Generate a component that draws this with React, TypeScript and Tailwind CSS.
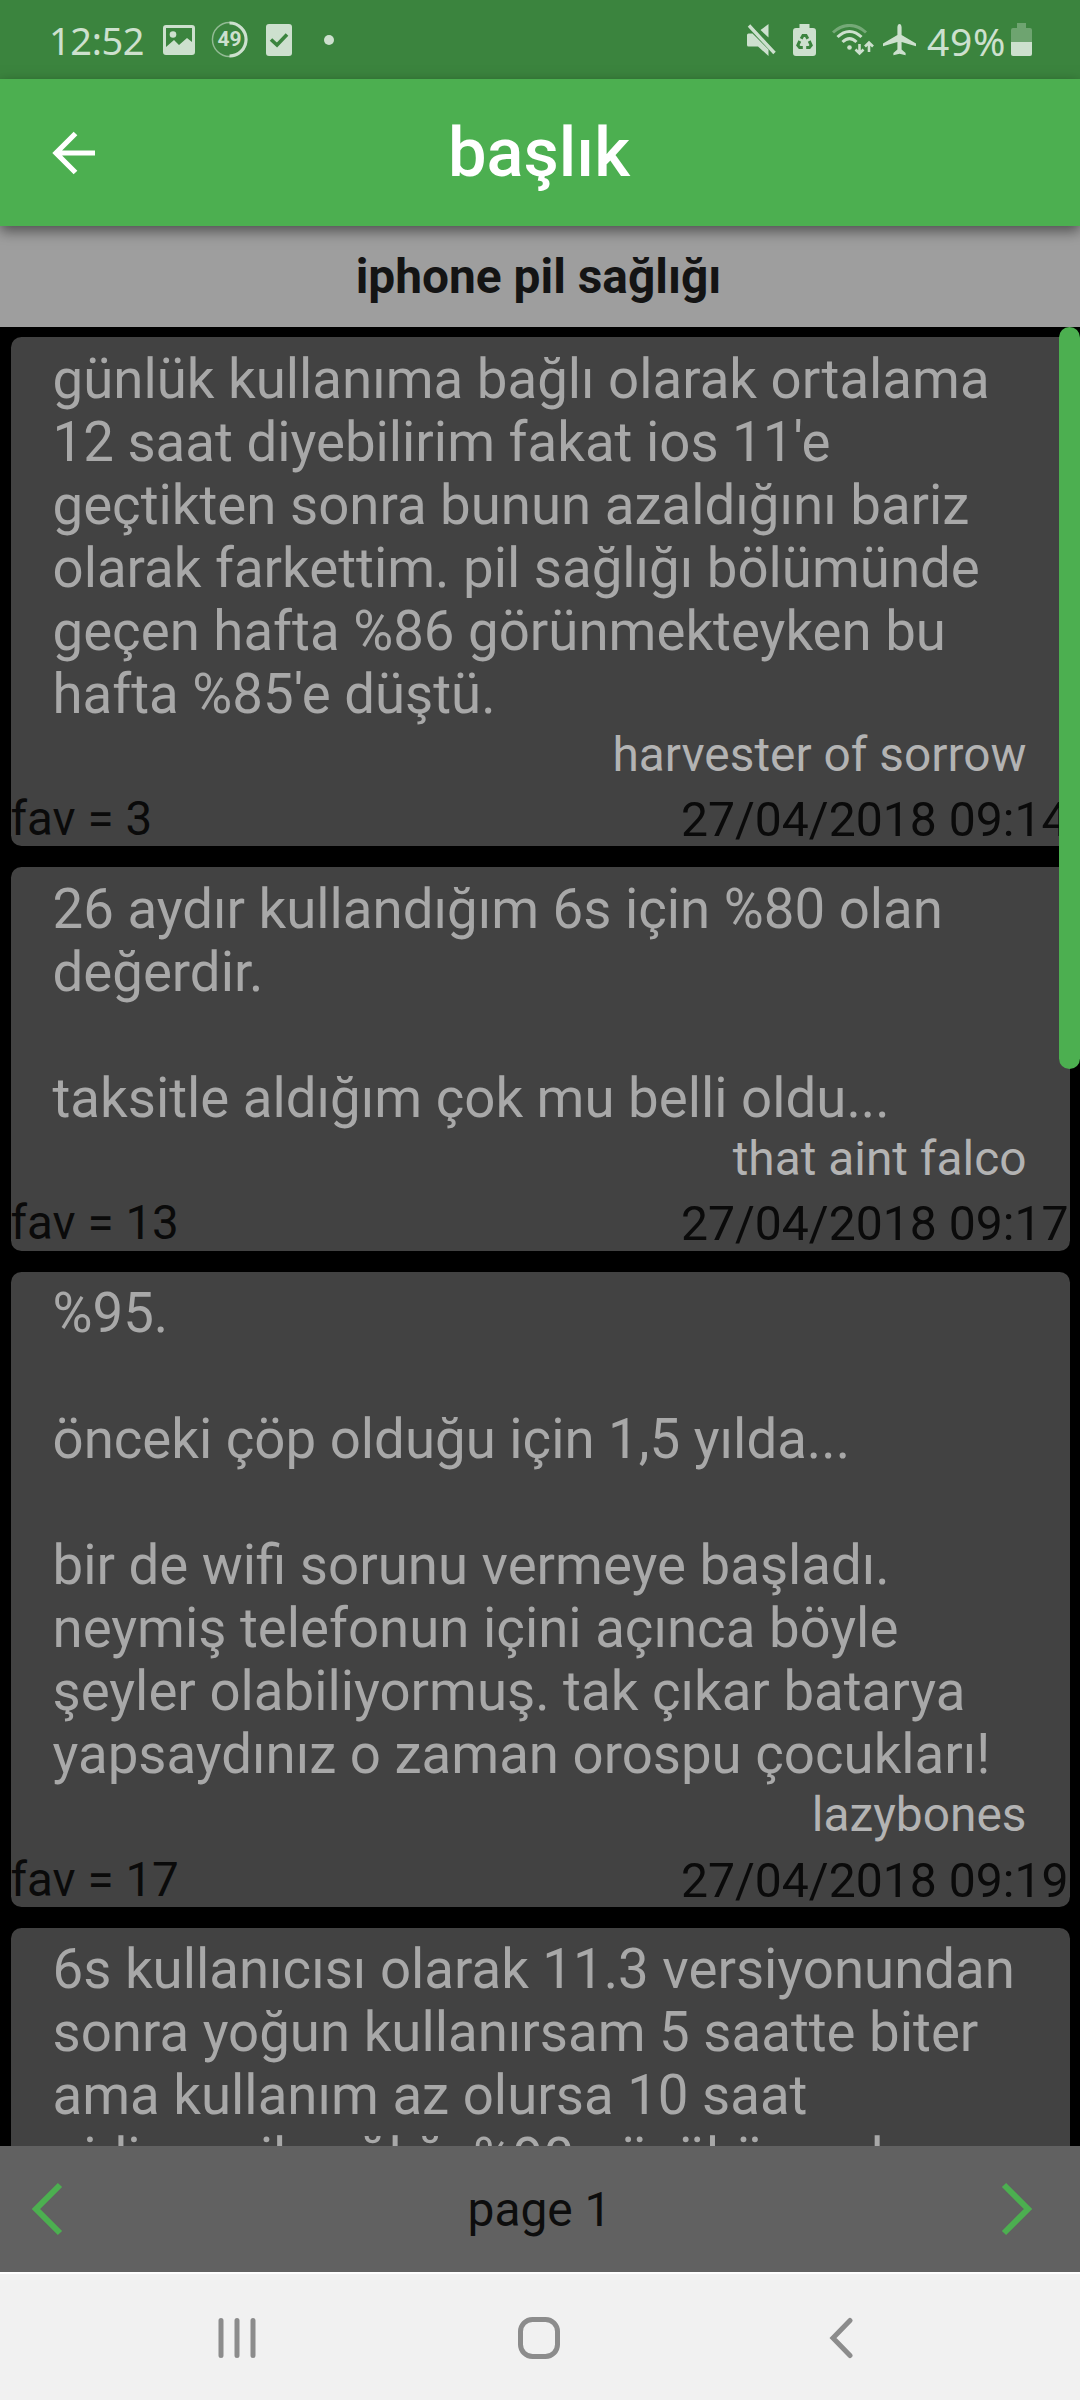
import type { ReactNode } from "react";

type Entry = { lines: string[]; author?: string; fav?: number; date?: string };

const entries: Entry[] = [
  {
    lines: [
      "günlük kullanıma bağlı olarak ortalama",
      "12 saat diyebilirim fakat ios 11'e",
      "geçtikten sonra bunun azaldığını bariz",
      "olarak farkettim. pil sağlığı bölümünde",
      "geçen hafta %86 görünmekteyken bu",
      "hafta %85'e düştü.",
    ],
    author: "harvester of sorrow",
    fav: 3,
    date: "27/04/2018 09:14",
  },
  {
    lines: ["26 aydır kullandığım 6s için %80 olan", "değerdir.", "", "taksitle aldığım çok mu belli oldu..."],
    author: "that aint falco",
    fav: 13,
    date: "27/04/2018 09:17",
  },
  {
    lines: [
      "%95.",
      "",
      "önceki çöp olduğu için 1,5 yılda...",
      "",
      "bir de wifi sorunu vermeye başladı.",
      "neymiş telefonun içini açınca böyle",
      "şeyler olabiliyormuş. tak çıkar batarya",
      "yapsaydınız o zaman orospu çocukları!",
    ],
    author: "lazybones",
    fav: 17,
    date: "27/04/2018 09:19",
  },
  {
    lines: [
      "6s kullanıcısı olarak 11.3 versiyonundan",
      "sonra yoğun kullanırsam 5 saatte biter",
      "ama kullanım az olursa 10 saat",
      "gidiyor pil sağlığı %90 gözüküyor de",
    ],
  },
];

function StatusBar() {
  return (
    <div className="flex h-[79px] shrink-0 items-center bg-[#3b843e] text-[#cde0ce]">
      <span className="ml-[49px] w-[114px] whitespace-nowrap pt-0.5 font-['Noto_Sans'] text-[38px] leading-[79px] tracking-[-0.4px]">
        12:52
      </span>
      <svg width="32" height="30" viewBox="0 0 32 30" fill="currentColor">
        <path
          fillRule="evenodd"
          d="M3 0h26a3 3 0 0 1 3 3v24a3 3 0 0 1-3 3H3a3 3 0 0 1-3-3V3a3 3 0 0 1 3-3ZM3 3v19l8-7 5 5 8-7 5 4V3Z"
        />
        <circle cx="10" cy="9.500" r="3.300" />
      </svg>
      <span className="relative ml-4 flex h-[37px] w-[37px] items-center justify-center">
        <svg className="absolute inset-0" width="37" height="37" viewBox="0 0 38 38" fill="none" stroke="currentColor">
          <circle cx="19" cy="19" r="17.500" strokeWidth="1.500" opacity="0.6" />
          <path d="M19 2a17 17 0 0 1 0 34" strokeWidth="3.200" />
        </svg>
        <span className="font-['Roboto'] text-[21px] font-bold leading-none">49</span>
      </span>
      <svg className="ml-[18px]" width="26" height="32" viewBox="0 0 26 32">
        <rect width="26" height="32" rx="3" fill="currentColor" />
        <path d="M5 15.500l6 5.500 10-10.500" fill="none" stroke="#3b843e" strokeWidth="3.600" />
      </svg>
      <span className="ml-8 h-2.5 w-2.5 rounded-full bg-current" />

      <svg className="ml-auto" width="29" height="32" viewBox="0 0 29 32" fill="currentColor">
        <path d="M21.500 0v13.500L13.500 6ZM1.500 9.500h4l16 16v6.500L11 22.500H1.500A1.500 1.500 0 0 1 0 21V11a1.500 1.500 0 0 1 1.500-1.500Z" />
        <path d="M2 1.500 27.500 29" stroke="currentColor" strokeWidth="3.400" />
        <path d="M4.500 0 29 26.500" stroke="#3b843e" strokeWidth="1.200" />
      </svg>
      <svg className="ml-[17px]" width="23" height="32" viewBox="0 0 23 32">
        <path fill="currentColor" d="M6.500 0h10v4H20a3 3 0 0 1 3 3v22a3 3 0 0 1-3 3H3a3 3 0 0 1-3-3V7a3 3 0 0 1 3-3h3.500Z" />
        <g fill="none" stroke="#3b843e" strokeWidth="3">
          <path d="M8.200 14.800 10 11.500h3l1.800 3.300" />
          <path d="M6.800 17 4.800 21.300 6.600 23.500h3.200" />
          <path d="M16.200 17 18.200 21.300 16.400 23.500h-3.200" />
        </g>
      </svg>
      <svg className="ml-4" width="42" height="32" viewBox="0 0 42 32" fill="none" stroke="currentColor" strokeWidth="3">
        <path d="M1 8.500C11-1 24-1 34 8.500" opacity="0.4" />
        <path d="M5.500 13C13 5.500 22 5.500 29.500 13" />
        <path d="M10.500 18C15 13.500 20 13.500 24.500 18" />
        <circle cx="17.500" cy="23.500" r="2.300" fill="currentColor" stroke="none" />
        <path d="M27.500 20v9M23.500 25.500l4 4 4-4M37 28v-9M33 22.500l4-4 4 4" strokeWidth="2.600" />
      </svg>
      <svg className="ml-[9px]" width="33" height="32" viewBox="0 0 33 32" fill="currentColor">
        <path d="M16.500 0c1.300 0 2.100 1.600 2.100 3.500V11L33 19.500v2.700L18.600 18v7.500l4 3.500v2.300l-6.100-1.500-6.100 1.500V29l4-3.500V18L0 22.200v-2.700L14.400 11V3.500C14.400 1.600 15.200 0 16.500 0Z" />
      </svg>
      <span className="ml-[11px] w-[80px] whitespace-nowrap pt-0.5 font-['Noto_Sans'] text-[39px] leading-[79px] tracking-[0.7px]">
        49%
      </span>
      <svg className="ml-[4px] mr-[48px]" width="21" height="33" viewBox="0 0 21 33" fill="currentColor">
        <path d="M6 0h9v5h4a2 2 0 0 1 2 2v12H0V7a2 2 0 0 1 2-2h4Z" opacity="0.35" />
        <path d="M0 19h21v12a2 2 0 0 1-2 2H2a2 2 0 0 1-2-2Z" />
      </svg>
    </div>
  );
}

function AppBar() {
  return (
    <header className="relative z-10 flex h-[147px] shrink-0 items-center bg-[#4caf50] pl-[52px] shadow-[0_5px_13px_rgba(0,0,0,0.5)]">
      <svg width="44" height="44" viewBox="0 0 44 44" fill="none" stroke="#fff" strokeWidth="5.200">
        <path d="M43 22H5M23.500 2.500 4 22 23.500 41.500" />
      </svg>
      <h1 className="mr-[98px] flex-1 pt-px text-center text-[68.6px] font-medium leading-none text-white">başlık</h1>
    </header>
  );
}

function EntryCard({ lines, author, fav, date }: Entry) {
  return (
    <article className="shrink-0 rounded-[10.5px] bg-[#424242] pt-[10.5px]">
      <div className="whitespace-pre px-[42px] text-[54.6px] leading-[62px] text-[#a8a8a8]">
        {lines.map((line, i) => (
          <p key={i} className="h-[63px]">
            {line}
          </p>
        ))}
      </div>
      {author && (
        <>
          <p className="h-[55px] pl-[42px] pr-[43px] text-right text-[47.85px] leading-[59px] text-[#b3b3b3]">{author}</p>
          <div className="mt-[10.5px] flex h-[55.25px] justify-between whitespace-nowrap pr-px text-[48.1px] leading-[57px] text-[#0a0a0a]">
            <span className="text-[47.6px]">fav = {fav}</span>
            <span>{date}</span>
          </div>
        </>
      )}
    </article>
  );
}

function NavItem({ children }: { children: ReactNode }) {
  return <div className="flex flex-1 items-center justify-center">{children}</div>;
}

export default function App() {
  return (
    <div className="flex h-[2400px] w-[1080px] flex-col overflow-hidden bg-black font-['Roboto',sans-serif]">
      <StatusBar />
      <AppBar />
      <h2 className="h-[100.5px] shrink-0 bg-[#9e9e9e] pr-[3px] text-center text-[47.85px] font-bold leading-[102px] text-[#141414]">
        iphone pil sağlığı
      </h2>
      <main className="relative flex min-h-0 flex-1 flex-col gap-[21px] overflow-hidden px-[10.5px] pt-[10.5px]">
        {entries.map((e, i) => (
          <EntryCard key={i} {...e} />
        ))}
        <div className="absolute right-0 top-0 h-[742.5px] w-[21.5px] rounded-full bg-[#4caf50]" />
      </main>
      <footer className="flex h-[126px] shrink-0 items-center bg-[#616161] pl-[31px] pr-[47px] text-[47.9px] text-[#0d0d0d]">
        <svg width="32" height="54" viewBox="0 0 32 54" fill="none" stroke="#4caf50" strokeWidth="6">
          <path d="M29 3 5 27 29 51" />
        </svg>
        <span className="flex-1 pl-[15px] pt-[3px] text-center">page 1</span>
        <svg width="32" height="54" viewBox="0 0 32 54" fill="none" stroke="#4caf50" strokeWidth="6">
          <path d="M3 3 27 27 3 51" />
        </svg>
      </footer>
      <nav className="flex h-[128px] shrink-0 border-t-2 border-white bg-[#f1f1f1] pl-[86px] pr-[88px] pt-0.5">
        <NavItem>
          <svg width="38" height="42" viewBox="0 0 38 42" stroke="#8c8c8c" strokeWidth="5" strokeLinecap="round">
            <path d="M3 3.500v35M19 3.500v35M35 3.500v35" />
          </svg>
        </NavItem>
        <NavItem>
          <svg width="42" height="42" viewBox="0 0 42 42" fill="none" stroke="#8c8c8c" strokeWidth="5">
            <rect x="2.500" y="2.500" width="37" height="37" rx="12" />
          </svg>
        </NavItem>
        <NavItem>
          <svg width="24" height="42" viewBox="0 0 24 42" fill="none" stroke="#8c8c8c" strokeWidth="5" strokeLinecap="round">
            <path d="M21 3.500 4 21 21 38.500" />
          </svg>
        </NavItem>
      </nav>
    </div>
  );
}
